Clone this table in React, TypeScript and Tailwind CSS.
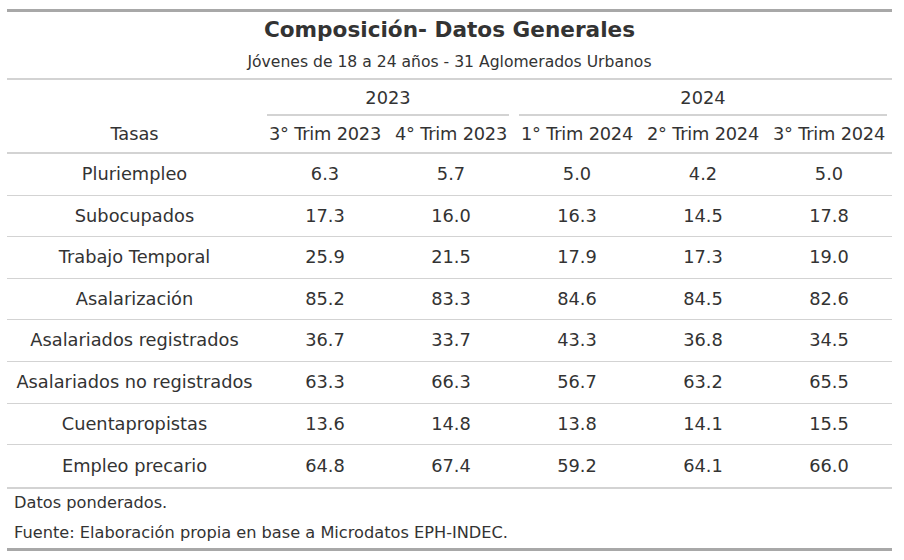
import React from 'react'

const rows: [string, string[]][] = [
  ['Pluriempleo', ['6.3', '5.7', '5.0', '4.2', '5.0']],
  ['Subocupados', ['17.3', '16.0', '16.3', '14.5', '17.8']],
  ['Trabajo Temporal', ['25.9', '21.5', '17.9', '17.3', '19.0']],
  ['Asalarización', ['85.2', '83.3', '84.6', '84.5', '82.6']],
  ['Asalariados registrados', ['36.7', '33.7', '43.3', '36.8', '34.5']],
  ['Asalariados no registrados', ['63.3', '66.3', '56.7', '63.2', '65.5']],
  ['Cuentapropistas', ['13.6', '14.8', '13.8', '14.1', '15.5']],
  ['Empleo precario', ['64.8', '67.4', '59.2', '64.1', '66.0']],
]

const cols = ['3° Trim 2023', '4° Trim 2023', '1° Trim 2024', '2° Trim 2024', '3° Trim 2024']

export default function App() {
  return (
    <div className="min-h-screen bg-white pt-[9px] pl-[7px] text-[#333333]" style={{ fontFamily: '"DejaVu Sans", sans-serif' }}>
      <div className="w-[885px] border-t-[3px] border-b-[3px] border-[#a8a8a8]">
        <div className="border-b-2 border-[#d3d3d3]">
          <div className="h-[36px] flex items-center justify-center text-[21.6px] font-bold">Composición- Datos Generales</div>
          <div className="h-[30px] flex items-center justify-center text-[15.6px]">Jóvenes de 18 a 24 años - 31 Aglomerados Urbanos</div>
        </div>

        <div className="grid grid-cols-[255px_repeat(5,126px)] border-b-2 border-[#d3d3d3] text-[17.8px]">
          <div className="row-span-2 flex items-end justify-center h-[72px]">
            <div className="h-[36px] flex items-center">Tasas</div>
          </div>
          <div className="col-span-2 h-[36px] flex flex-col justify-end px-[5px]">
            <div className="flex-1 flex items-center justify-center pt-[3px]">2023</div>
            <div className="h-[2px] bg-[#d3d3d3]" />
          </div>
          <div className="col-span-3 h-[36px] flex flex-col justify-end px-[5px]">
            <div className="flex-1 flex items-center justify-center pt-[3px]">2024</div>
            <div className="h-[2px] bg-[#d3d3d3]" />
          </div>
          {cols.map(c => (
            <div key={c} className="h-[36px] flex items-center justify-center whitespace-nowrap tracking-[-0.2px]">{c}</div>
          ))}
        </div>

        <div className="border-b-2 border-[#d3d3d3] text-[17.8px]">
          {rows.map(([label, vals], i) => (
            <div
              key={label}
              className={`grid grid-cols-[255px_repeat(5,126px)] h-[41.6px] items-center ${i < rows.length - 1 ? 'border-b border-[#d3d3d3]' : ''}`}
            >
              <div className="text-center whitespace-nowrap">{label}</div>
              {vals.map((v, j) => (
                <div key={j} className="text-center">{v}</div>
              ))}
            </div>
          ))}
        </div>

        <div className="text-[16.2px] px-[7px]">
          <div className="h-[29px] flex items-center">Datos ponderados.</div>
          <div className="h-[30px] flex items-center">Fuente: Elaboración propia en base a Microdatos EPH-INDEC.</div>
        </div>
      </div>
    </div>
  )
}
